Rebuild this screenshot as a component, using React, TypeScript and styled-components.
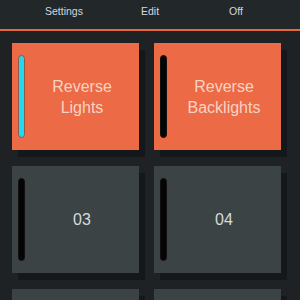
import React from "react";
import styled, { createGlobalStyle } from "styled-components";

const Global = createGlobalStyle`
  html, body { margin: 0; padding: 0; background: #1e2225; }
  body { font-family: "Liberation Sans", Arial, sans-serif; overflow: hidden; }
`;

const Page = styled.div`
  width: 300px;
  height: 300px;
  background: #1e2225;
  overflow: hidden;
`;

const Header = styled.div`
  height: 29px;
  background: #22272a;
  display: flex;
  justify-content: center;
  align-items: center;
  border-bottom: 2px solid #e8673f;
`;

const HeaderItem = styled.div`
  width: 86px;
  text-align: center;
  color: #d4d8da;
  font-size: 10.5px;
  padding-bottom: 8px;
`;

const Grid = styled.div`
  display: grid;
  grid-template-columns: 127px 127px;
  grid-auto-rows: 107px;
  column-gap: 15px;
  row-gap: 16px;
  padding: 12px 0 0 12px;
`;

const Card = styled.div<{ $active?: boolean }>`
  display: flex;
  align-items: stretch;
  background: ${(p) => (p.$active ? "#ec6a45" : "#3b4345")};
  box-shadow: 6px 7px 0 #15181a;
  padding: 12px 0;
  box-sizing: border-box;
`;

const Bar = styled.div<{ $on?: boolean }>`
  width: 7px;
  margin-left: 6px;
  border-radius: 4px;
  box-sizing: border-box;
  background: ${(p) => (p.$on ? "#27d7ef" : "#050505")};
  border: 1px solid ${(p) => (p.$on ? "#8a5a4a" : "#111")};
`;

const Label = styled.div<{ $active?: boolean }>`
  flex: 1;
  display: flex;
  align-items: center;
  justify-content: center;
  text-align: center;
  font-size: 16px;
  line-height: 21px;
  color: ${(p) => (p.$active ? "#f8d3c4" : "#d6dadb")};
`;

const cards = [
  { label: "Reverse\nLights", active: true, on: true },
  { label: "Reverse\nBacklights", active: true, on: false },
  { label: "03", active: false, on: false },
  { label: "04", active: false, on: false },
  { label: "", active: false, on: false },
  { label: "", active: false, on: false },
];

export default function App() {
  return (
    <Page>
      <Global />
      <Header>
        <HeaderItem>Settings</HeaderItem>
        <HeaderItem>Edit</HeaderItem>
        <HeaderItem>Off</HeaderItem>
      </Header>
      <Grid>
        {cards.map((c, i) => (
          <Card key={i} $active={c.active}>
            <Bar $on={c.on} />
            <Label $active={c.active}>
              {c.label.split("\n").map((l, j) => (
                <React.Fragment key={j}>
                  {j > 0 && <br />}
                  {l}
                </React.Fragment>
              ))}
            </Label>
          </Card>
        ))}
      </Grid>
    </Page>
  );
}
